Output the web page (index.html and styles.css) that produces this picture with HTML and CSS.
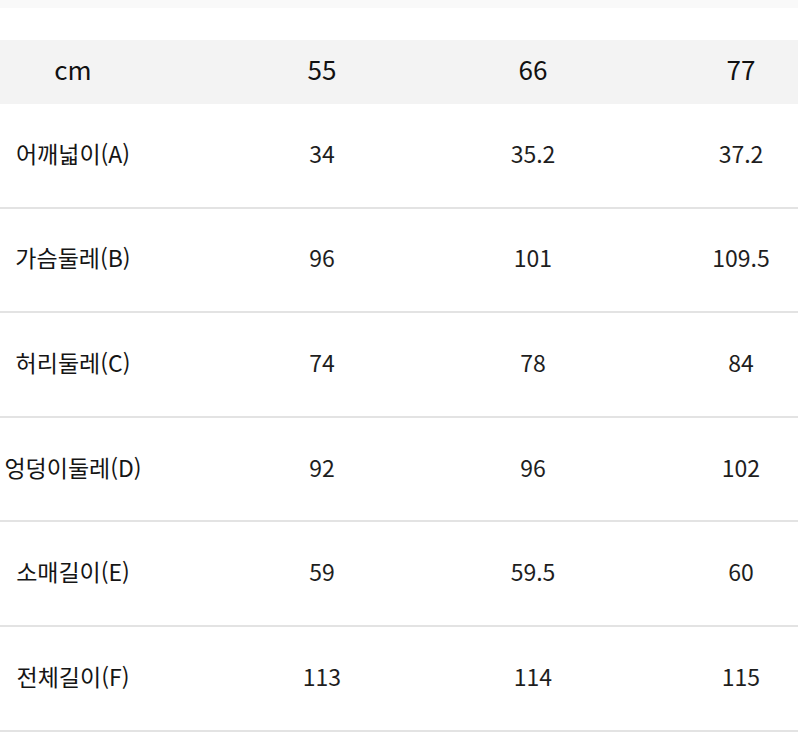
FILE: index.html
```html
<!DOCTYPE html>
<html lang="ko">
<head>
<meta charset="utf-8">
<title>사이즈표</title>
<link rel="stylesheet" href="styles.css">
</head>
<body>
<div class="page">
  <div class="topband"></div>
  <div class="spacer"></div>
  <div class="size-table">
    <div class="row head">
      <div class="cell">cm</div>
      <div class="cell">55</div>
      <div class="cell">66</div>
      <div class="cell">77</div>
    </div>
    <div class="row">
      <div class="cell label">어깨넓이(A)</div>
      <div class="cell">34</div>
      <div class="cell">35.2</div>
      <div class="cell">37.2</div>
    </div>
    <div class="row">
      <div class="cell label">가슴둘레(B)</div>
      <div class="cell">96</div>
      <div class="cell">101</div>
      <div class="cell">109.5</div>
    </div>
    <div class="row">
      <div class="cell label">허리둘레(C)</div>
      <div class="cell">74</div>
      <div class="cell">78</div>
      <div class="cell">84</div>
    </div>
    <div class="row">
      <div class="cell label">엉덩이둘레(D)</div>
      <div class="cell">92</div>
      <div class="cell">96</div>
      <div class="cell">102</div>
    </div>
    <div class="row">
      <div class="cell label">소매길이(E)</div>
      <div class="cell">59</div>
      <div class="cell">59.5</div>
      <div class="cell">60</div>
    </div>
    <div class="row">
      <div class="cell label">전체길이(F)</div>
      <div class="cell">113</div>
      <div class="cell">114</div>
      <div class="cell">115</div>
    </div>
  </div>
</div>
</body>
</html>
```

FILE: styles.css
```css
html, body {
  margin: 0;
  padding: 0;
  background: #ffffff;
  overflow: hidden;
}
body {
  font-family: "Noto Sans CJK KR", "Noto Sans", sans-serif;
  color: #1e1e1e;
}
.page {
  width: 798px;
  height: 738px;
  overflow: hidden;
}
.topband {
  height: 8px;
  background: #f9f9f9;
}
.spacer {
  height: 32px;
}
.row {
  display: grid;
  grid-template-columns: 146px 352px 70px 346px;
  align-items: center;
  box-sizing: border-box;
  height: 104.6px;
  padding-bottom: 4px;
  border-bottom: 2px solid #e3e3e3;
}
.row.head {
  height: 64px;
  padding-bottom: 7px;
  background: #f3f3f3;
  border-bottom: none;
}
.cell {
  text-align: center;
  white-space: nowrap;
  font-size: 23px;
  line-height: 1;
}
.head .cell {
  font-size: 26px;
  color: #111111;
}
.label {
  color: #151515;
}
```
